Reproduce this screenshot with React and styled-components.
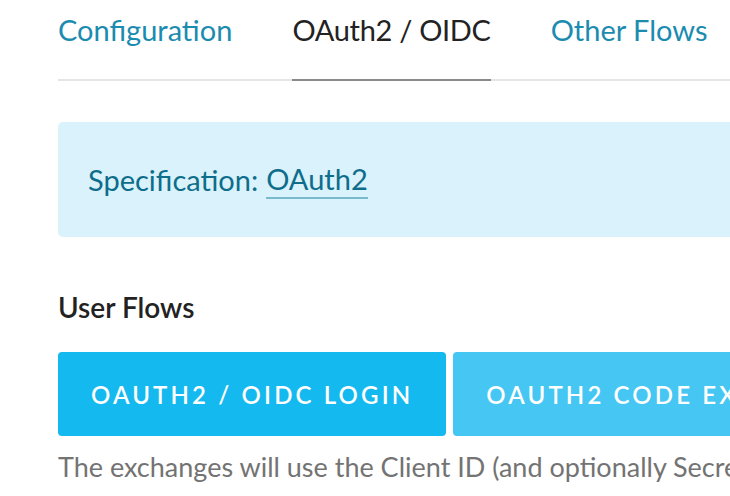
import styled, { createGlobalStyle } from "styled-components";

const GlobalStyle = createGlobalStyle`
  html, body {
    margin: 0;
    padding: 0;
    background: #ffffff;
    overflow: hidden;
  }
  body {
    font-family: Lato, "Open Sans", sans-serif;
    -webkit-font-smoothing: antialiased;
  }
`;

const Page = styled.div`
  width: 730px;
  height: 496px;
  overflow: hidden;
  padding: 0 0 0 58px;
  box-sizing: border-box;
`;

const Inner = styled.div`
  width: 1000px;
`;

const Tabs = styled.nav`
  display: flex;
  gap: 60px;
  border-bottom: 2px solid #e6e6e6;
  height: 81px;
  box-sizing: border-box;
`;

const Tab = styled.a`
  display: block;
  font-size: 29px;
  line-height: 1;
  padding-top: 15px;
  letter-spacing: ${(p) => (p.$active ? "-0.3px" : "0")};
  color: ${(p) => (p.$active ? "#222222" : "#1b8bb0")};
  text-decoration: none;
  height: 81px;
  box-sizing: border-box;
  border-bottom: 2px solid ${(p) => (p.$active ? "#8a8a8a" : "transparent")};
`;

const Callout = styled.div`
  margin-top: 41px;
  background: #d9f2fb;
  border-radius: 5px;
  height: 115px;
  display: flex;
  align-items: center;
  padding-left: 30px;
  font-size: 29px;
  color: #0e6d8b;
`;

const SpecLink = styled.a`
  color: #0e6d8b;
  text-decoration: none;
  border-bottom: 2px solid #7bb9cc;
  padding-bottom: 1px;
  margin-left: 8px;
`;

const SectionTitle = styled.h3`
  margin: 53px 0 0;
  font-size: 28px;
  font-weight: 600;
  color: #222222;
  line-height: 34px;
`;

const ButtonRow = styled.div`
  display: flex;
  gap: 7px;
  margin-top: 28px;
`;

const FlowButton = styled.button`
  flex: none;
  border: none;
  border-radius: 4px;
  height: 84px;
  padding: 0 33px;
  background: ${(p) => (p.$light ? "#46c7f3" : "#14b9ef")};
  color: #ffffff;
  font-family: Lato, "Open Sans", sans-serif;
  font-size: 24px;
  font-weight: 600;
  letter-spacing: 3.15px;
  text-transform: uppercase;
  white-space: nowrap;
  cursor: pointer;
`;

const Note = styled.p`
  margin: 14px 0 0;
  font-size: 27px;
  line-height: 1.25;
  color: #737373;
  white-space: nowrap;
`;

const App = () => {
  return (
    <Page>
      <GlobalStyle />
      <Inner>
        <Tabs>
          <Tab href="#">Configuration</Tab>
          <Tab href="#" $active>OAuth2 / OIDC</Tab>
          <Tab href="#">Other Flows</Tab>
        </Tabs>
        <Callout>
          Specification:<SpecLink href="#">OAuth2</SpecLink>
        </Callout>
        <SectionTitle>User Flows</SectionTitle>
        <ButtonRow>
          <FlowButton>OAuth2 / OIDC Login</FlowButton>
          <FlowButton $light>OAuth2 Code Exchange</FlowButton>
        </ButtonRow>
        <Note>
          The exchanges will use the Client ID (and optionally Secret) from the
          configuration.
        </Note>
      </Inner>
    </Page>
  );
};

export default App;
